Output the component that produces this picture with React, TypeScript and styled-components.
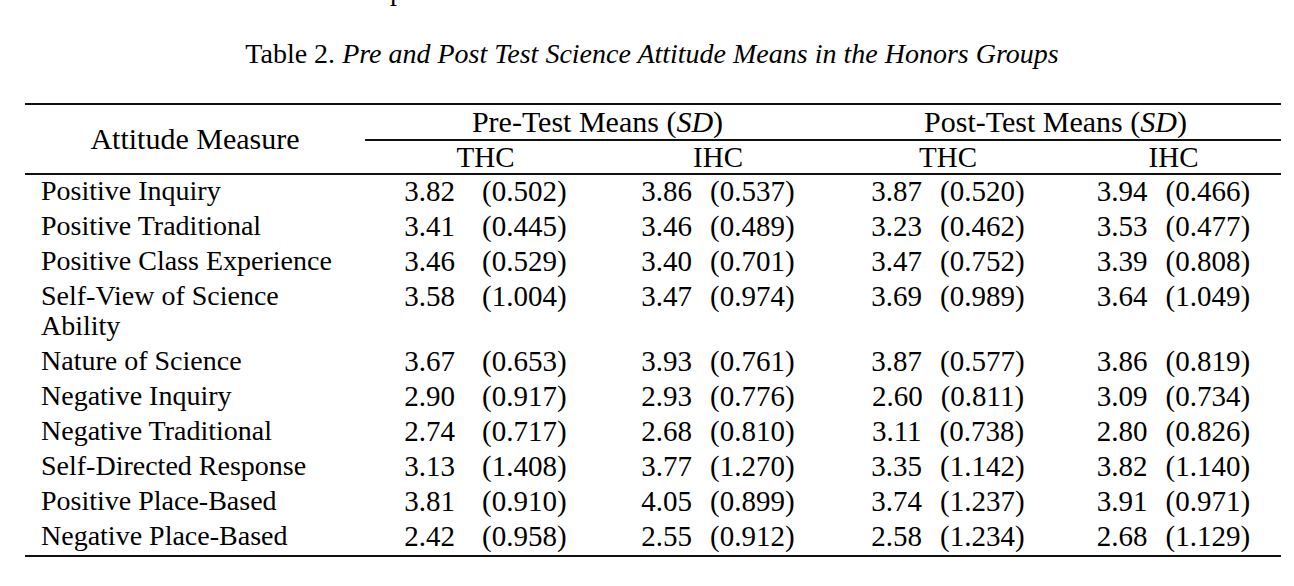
import React from 'react';
import styled, { createGlobalStyle } from 'styled-components';

type Stat = [string, string];

type AttitudeRow = {
  label: string[];
  values: Stat[];
};

const rows: AttitudeRow[] = [
  { label: ['Positive Inquiry'], values: [['3.82', '(0.502)'], ['3.86', '(0.537)'], ['3.87', '(0.520)'], ['3.94', '(0.466)']] },
  { label: ['Positive Traditional'], values: [['3.41', '(0.445)'], ['3.46', '(0.489)'], ['3.23', '(0.462)'], ['3.53', '(0.477)']] },
  { label: ['Positive Class Experience'], values: [['3.46', '(0.529)'], ['3.40', '(0.701)'], ['3.47', '(0.752)'], ['3.39', '(0.808)']] },
  { label: ['Self-View of Science', 'Ability'], values: [['3.58', '(1.004)'], ['3.47', '(0.974)'], ['3.69', '(0.989)'], ['3.64', '(1.049)']] },
  { label: ['Nature of Science'], values: [['3.67', '(0.653)'], ['3.93', '(0.761)'], ['3.87', '(0.577)'], ['3.86', '(0.819)']] },
  { label: ['Negative Inquiry'], values: [['2.90', '(0.917)'], ['2.93', '(0.776)'], ['2.60', '(0.811)'], ['3.09', '(0.734)']] },
  { label: ['Negative Traditional'], values: [['2.74', '(0.717)'], ['2.68', '(0.810)'], ['3.11', '(0.738)'], ['2.80', '(0.826)']] },
  { label: ['Self-Directed Response'], values: [['3.13', '(1.408)'], ['3.77', '(1.270)'], ['3.35', '(1.142)'], ['3.82', '(1.140)']] },
  { label: ['Positive Place-Based'], values: [['3.81', '(0.910)'], ['4.05', '(0.899)'], ['3.74', '(1.237)'], ['3.91', '(0.971)']] },
  { label: ['Negative Place-Based'], values: [['2.42', '(0.958)'], ['2.55', '(0.912)'], ['2.58', '(1.234)'], ['2.68', '(1.129)']] },
];

const groups = ['Pre-Test Means', 'Post-Test Means'];
const subHeads = ['THC', 'IHC', 'THC', 'IHC'];
const colWidths = [340, 241, 224, 236, 215];

const App = () => {
  return (
    <Page>
      <GlobalStyle />
      <TopCut>
        <span>p</span>
      </TopCut>
      <Caption>
        Table 2. <em>Pre and Post Test Science Attitude Means in the Honors Groups</em>
      </Caption>

      <Table>
        <colgroup>
          {colWidths.map((w, i) => (
            <col key={i} style={{ width: w }} />
          ))}
        </colgroup>
        <thead>
          <tr>
            <MeasureHead rowSpan={2}>Attitude Measure</MeasureHead>
            {groups.map((g) => (
              <GroupHead key={g} colSpan={2}>
                {g} (<em>SD</em>)
              </GroupHead>
            ))}
          </tr>
          <tr>
            {subHeads.map((s, i) => (
              <SubHead key={i}>{s}</SubHead>
            ))}
          </tr>
        </thead>
        <tbody>
          {rows.map((row, r) => (
            <BodyRow key={r} $last={r === rows.length - 1}>
              <LabelCell>
                {row.label.map((line, i) => (
                  <div key={i}>{line}</div>
                ))}
              </LabelCell>
              {row.values.map(([mean, sd], c) => (
                <ValueCell key={c}>
                  <Pair $wide={c === 0}>
                    <span>{mean}</span>
                    <span>{sd}</span>
                  </Pair>
                </ValueCell>
              ))}
            </BodyRow>
          ))}
        </tbody>
      </Table>
    </Page>
  );
};

export default App;

/* Styles */

const GlobalStyle = createGlobalStyle`
  html, body {
    margin: 0;
    padding: 0;
    background: #fff;
  }
  body {
    font-family: 'Liberation Serif', 'Times New Roman', serif;
    color: #000;
  }
`;

const Page = styled.div`
  width: 1294px;
  height: 586px;
  overflow: hidden;
  background: #fff;
`;

const TopCut = styled.div`
  height: 9px;
  overflow: hidden;
  font-size: 28px;

  span {
    display: block;
    line-height: 30px;
    margin-top: -24px;
    padding-left: 390px;
  }
`;

const Caption = styled.div`
  margin-top: 30px;
  font-size: 28px;
  line-height: 30px;
  text-align: center;
  padding-left: 10px;

  em {
    font-style: italic;
  }
`;

const Table = styled.table`
  margin: 34px 0 0 25px;
  width: 1256px;
  table-layout: fixed;
  border-collapse: separate;
  border-spacing: 0;
  font-size: 28px;
`;

const MeasureHead = styled.th`
  font-weight: normal;
  font-size: 30px;
  text-align: center;
  vertical-align: middle;
  border-top: 2px solid #111;
  border-bottom: 2px solid #111;
  padding: 0;
`;

const GroupHead = styled.th`
  font-weight: normal;
  font-size: 30px;
  line-height: 34px;
  text-align: center;
  border-top: 2px solid #111;
  border-bottom: 2px solid #111;
  padding: 0;

  em {
    font-style: italic;
  }
`;

const SubHead = styled.th`
  font-weight: normal;
  font-size: 29px;
  line-height: 32px;
  text-align: center;
  border-bottom: 2px solid #111;
  padding: 0;
`;

const BodyRow = styled.tr<{ $last: boolean }>`
  td {
    line-height: 30px;
    padding-top: 1px;
    padding-bottom: 4px;
    vertical-align: top;
    border-bottom: ${(p) => (p.$last ? '2px solid #111' : 'none')};
  }
`;

const LabelCell = styled.td`
  padding-left: 16px;
  text-align: left;
  white-space: nowrap;
`;

const ValueCell = styled.td`
  text-align: center;
  white-space: nowrap;
  font-size: 29px;
`;

const Pair = styled.span<{ $wide: boolean }>`
  display: inline-flex;
  gap: ${(p) => (p.$wide ? '27px' : '18px')};
`;
